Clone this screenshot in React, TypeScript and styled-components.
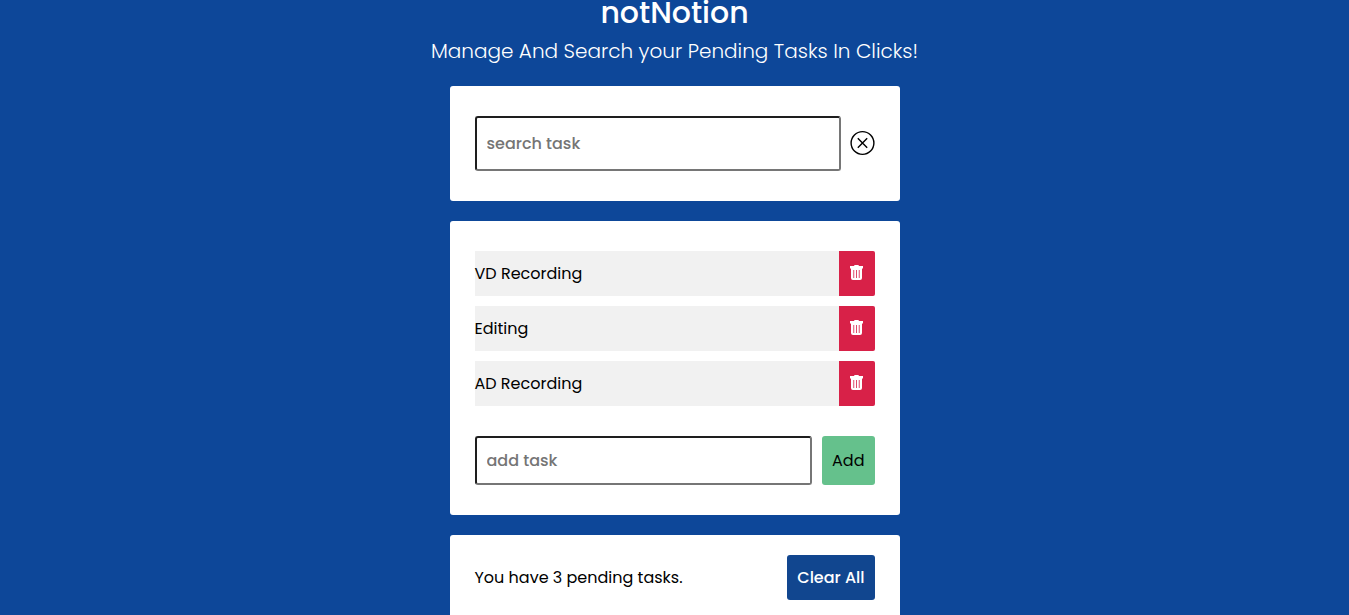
import React, { useState } from "react";
import styled, { createGlobalStyle } from "styled-components";

const GlobalStyle = createGlobalStyle`
  *, *::before, *::after { box-sizing: border-box; }
  body {
    margin: 0;
    min-height: 100vh;
    background: #0d4799;
    color: #000;
    font-family: Poppins, Inter, "Open Sans", sans-serif;
    font-size: 16px;
    line-height: 24px;
  }
  button, input { font: inherit; }
`;

const Page = styled.main`
  display: flex;
  flex-direction: column;
  align-items: center;
  gap: 20px;
  padding: 0 10px 20px;
`;

const Header = styled.header`
  display: flex;
  flex-direction: column;
  gap: 10px;
  text-align: center;
  color: #fff;
`;

const Title = styled.h1`
  margin: 0;
  font-size: 30px;
  font-weight: 500;
  line-height: 26px;
`;

const Subtitle = styled.p`
  margin: 0;
  font-size: 20px;
  font-weight: 300;
  line-height: 30px;
`;

const Card = styled.section<{ $compact?: boolean }>`
  width: 100%;
  max-width: 450px;
  padding: ${({ $compact }) => ($compact ? "20px" : "30px")} 25px;
  border-radius: 3px;
  background: #fff;
`;

const FieldRow = styled.form`
  display: flex;
  align-items: center;
  gap: 10px;
`;

const TextField = styled.input<{ $tall?: boolean }>`
  flex: 1;
  min-width: 0;
  height: ${({ $tall }) => ($tall ? "55px" : "49px")};
  padding: 0 10px;
  border: 2px solid;
  border-color: #1e1e1e #767676 #767676 #1e1e1e;
  border-radius: 3px;
  background: #fff;
  font-weight: 500;
  &::placeholder { color: #757575; opacity: 1; }
`;

const Button = styled.button<{ $primary?: boolean }>`
  padding: ${({ $primary }) => ($primary ? "10px" : "12px")} 10px;
  border: 0;
  border-radius: 3px;
  background: ${({ $primary }) => ($primary ? "#11468f" : "#65c18c")};
  color: ${({ $primary }) => ($primary ? "#fff" : "#000")};
  font-weight: ${({ $primary }) => ($primary ? 500 : 400)};
  line-height: 25px;
  cursor: pointer;
`;

const ResetButton = styled.button`
  display: flex;
  padding: 0;
  border: 0;
  background: none;
  color: #000;
  cursor: pointer;
`;

const TaskList = styled.ul`
  display: flex;
  flex-direction: column;
  gap: 10px;
  margin: 0 0 30px;
  padding: 0;
  list-style: none;
`;

const Task = styled.li`
  display: flex;
  align-items: center;
  justify-content: space-between;
  height: 45px;
  border-radius: 0 2px 2px 0;
  background: #f1f1f1;
`;

const DeleteButton = styled.button`
  display: flex;
  align-items: center;
  justify-content: center;
  width: 36px;
  height: 100%;
  padding: 0;
  border: 0;
  border-radius: 0 2px 2px 0;
  background: #d82148;
  color: #fff;
  cursor: pointer;
`;

const Summary = styled.div`
  display: flex;
  align-items: center;
  justify-content: space-between;
`;

const CrossCircleIcon = () => (
  <svg width="24" height="25" viewBox="0 0 24 25" overflow="visible" fill="none" stroke="currentColor" strokeWidth="1.4" aria-hidden="true">
    <circle cx="11.5" cy="12" r="11.4" />
    <path d="M6.8 7.3l9.4 9.4M16.2 7.3l-9.4 9.4" />
  </svg>
);

const TrashIcon = () => (
  <svg width="14" height="17" viewBox="0 1 14 17" fill="currentColor" aria-hidden="true">
    <path d="M4.3 1h4.4v1H13v2.4H0V2h4.3z" />
    <path
      fillRule="evenodd"
      d="M1 4h11v10a2 2 0 0 1-2 2H3a2 2 0 0 1-2-2zM3.4 6v8h.8V6zM6.1 6v8h.8V6zM8.8 6v8h.8V6z"
    />
  </svg>
);

export default function App() {
  const [tasks, setTasks] = useState(["VD Recording", "Editing", "AD Recording"]);
  const [query, setQuery] = useState("");
  const [draft, setDraft] = useState("");

  const addTask = (event: React.FormEvent) => {
    event.preventDefault();
    if (draft.trim()) setTasks([...tasks, draft.trim()]);
    setDraft("");
  };

  return (
    <>
      <GlobalStyle />
      <Page>
        <Header>
          <Title>notNotion</Title>
          <Subtitle>Manage And Search your Pending Tasks In Clicks!</Subtitle>
        </Header>
        <Card>
          <FieldRow onSubmit={(event) => event.preventDefault()}>
            <TextField
              $tall
              type="text"
              aria-label="search task"
              placeholder="search task"
              value={query}
              onChange={(event) => setQuery(event.target.value)}
            />
            <ResetButton type="button" aria-label="Clear search" onClick={() => setQuery("")}>
              <CrossCircleIcon />
            </ResetButton>
          </FieldRow>
        </Card>
        <Card>
          <TaskList>
            {tasks
              .filter((task) => task.toLowerCase().includes(query.toLowerCase()))
              .map((task) => (
                <Task key={task}>
                  <span>{task}</span>
                  <DeleteButton
                    type="button"
                    aria-label={`Delete ${task}`}
                    onClick={() => setTasks(tasks.filter((other) => other !== task))}
                  >
                    <TrashIcon />
                  </DeleteButton>
                </Task>
              ))}
          </TaskList>
          <FieldRow onSubmit={addTask}>
            <TextField
              type="text"
              aria-label="add task"
              placeholder="add task"
              value={draft}
              onChange={(event) => setDraft(event.target.value)}
            />
            <Button type="submit">Add</Button>
          </FieldRow>
        </Card>
        <Card $compact>
          <Summary>
            <span>You have {tasks.length} pending tasks.</span>
            <Button $primary type="button" onClick={() => setTasks([])}>
              Clear All
            </Button>
          </Summary>
        </Card>
      </Page>
    </>
  );
}
